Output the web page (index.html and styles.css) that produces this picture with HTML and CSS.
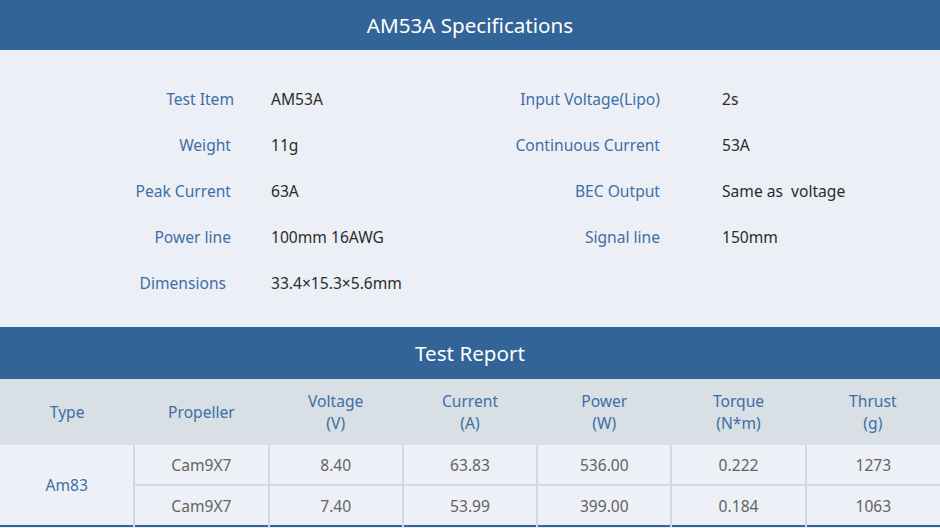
FILE: index.html
```html
<!DOCTYPE html>
<html lang="en">
<head>
<meta charset="utf-8">
<title>AM53A Specifications</title>
<link rel="stylesheet" href="styles.css">
</head>
<body>
<div class="page">
  <div class="bar">AM53A Specifications</div>
  <div class="specs">
    <div class="lbl w37">Test Item</div><div class="val">AM53A</div>
    <div class="lbl r">Input Voltage(Lipo)</div><div class="val">2s</div>
    <div class="lbl">Weight</div><div class="val">11g</div>
    <div class="lbl r">Continuous Current</div><div class="val">53A</div>
    <div class="lbl">Peak Current</div><div class="val">63A</div>
    <div class="lbl r">BEC Output</div><div class="val">Same as&nbsp; voltage</div>
    <div class="lbl">Power line</div><div class="val">100mm 16AWG</div>
    <div class="lbl r">Signal line</div><div class="val">150mm</div>
    <div class="lbl w45">Dimensions</div><div class="val">33.4×15.3×5.6mm</div>
  </div>
  <div class="bar bar2">Test Report</div>
  <table class="report">
    <thead>
      <tr>
        <th>Type</th>
        <th>Propeller</th>
        <th>Voltage<br>(V)</th>
        <th>Current<br>(A)</th>
        <th>Power<br>(W)</th>
        <th>Torque<br>(N*m)</th>
        <th>Thrust<br>(g)</th>
      </tr>
    </thead>
    <tbody>
      <tr>
        <td class="type" rowspan="2">Am83</td>
        <td>Cam9X7</td><td>8.40</td><td>63.83</td><td>536.00</td><td>0.222</td><td>1273</td>
      </tr>
      <tr>
        <td>Cam9X7</td><td>7.40</td><td>53.99</td><td>399.00</td><td>0.184</td><td>1063</td>
      </tr>
    </tbody>
  </table>
</div>
</body>
</html>
```

FILE: styles.css
```css
html, body {
  margin: 0;
  padding: 0;
  background: #ecf0f6;
}
body {
  font-family: "Noto Sans", "Open Sans", sans-serif;
  width: 940px;
  height: 528px;
  overflow: hidden;
}
.page {
  width: 940px;
}
.bar {
  background: #326497;
  color: #ffffff;
  height: 50px;
  display: flex;
  align-items: center;
  justify-content: center;
  font-size: 20.6px;
}
.bar2 {
  height: 52px;
}
.specs {
  display: grid;
  grid-template-columns: 271px 200px 251px 1fr;
  grid-auto-rows: 46px;
  padding: 26px 0 21px;
  font-size: 15.6px;
}
.lbl {
  color: #3d6ea6;
  text-align: right;
  padding-right: 40px;
  display: flex;
  align-items: center;
  justify-content: flex-end;
}
.lbl.w37 {
  padding-right: 37px;
}
.lbl.w45 {
  padding-right: 45px;
}
.lbl.r {
  padding-right: 62px;
}
.val {
  color: #2b2b2b;
  display: flex;
  align-items: center;
}
.report {
  width: 940px;
  border-collapse: collapse;
  table-layout: fixed;
  font-size: 15.6px;
  border-bottom: 2px solid #326497;
}
.report th {
  background: #d8dfe5;
  color: #3d6ea6;
  font-weight: normal;
  height: 66px;
  line-height: 22px;
  padding: 0;
  text-align: center;
}
.report td {
  background: #edf1f7;
  color: #666260;
  height: 39px;
  padding: 0;
  text-align: center;
  border: 2px solid #d3d8de;
  border-top: none;
}
.report tbody tr:last-child td {
  border-bottom: none;
}
.report td:first-child {
  border-left: none;
}
.report td:last-child {
  border-right: none;
}
.report td.type {
  color: #3d6ea6;
  border-bottom: none;
}
.report tr:first-child td {
  border-top: none;
}
```
